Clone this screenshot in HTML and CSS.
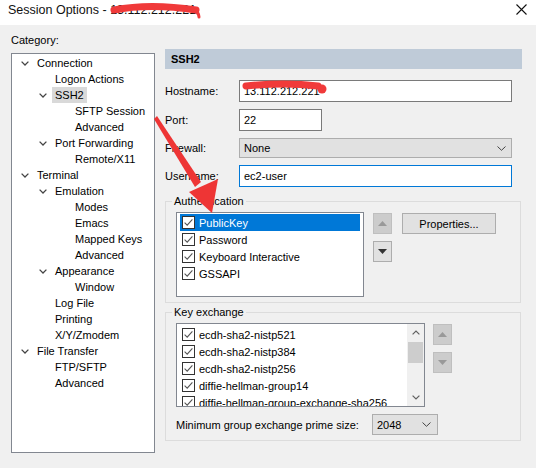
FILE: index.html
```html
<!DOCTYPE html>
<html>
<head>
<meta charset="utf-8">
<title>Session Options</title>
<link rel="stylesheet" href="styles.css">
</head>
<body>
<div class="window">
  <div class="titlebar">
    <span class="title">Session Options - 13.112.212.221</span>
    <svg class="close" width="11" height="11" viewBox="0 0 11 11"><path d="M0.5 0.5 L10.5 10.5 M10.5 0.5 L0.5 10.5" stroke="#111" stroke-width="1.1" fill="none"/></svg>
  </div>
  <div class="dialog">
    <div class="left">
      <div class="cat-label">Category:</div>
      <div class="tree">
        <div class="node l0"><span class="tog"><svg width="8" height="5" viewBox="0 0 8 5"><path d="M0.6 0.6 L4 4 L7.4 0.6" stroke="#444" stroke-width="1.3" fill="none"/></svg></span><span class="txt">Connection</span></div>
        <div class="node l1"><span class="tog"></span><span class="txt">Logon Actions</span></div>
        <div class="node l1 sel"><span class="tog"><svg width="8" height="5" viewBox="0 0 8 5"><path d="M0.6 0.6 L4 4 L7.4 0.6" stroke="#444" stroke-width="1.3" fill="none"/></svg></span><span class="txt">SSH2</span></div>
        <div class="node l2"><span class="tog"></span><span class="txt">SFTP Session</span></div>
        <div class="node l2"><span class="tog"></span><span class="txt">Advanced</span></div>
        <div class="node l1"><span class="tog"><svg width="8" height="5" viewBox="0 0 8 5"><path d="M0.6 0.6 L4 4 L7.4 0.6" stroke="#444" stroke-width="1.3" fill="none"/></svg></span><span class="txt">Port Forwarding</span></div>
        <div class="node l2"><span class="tog"></span><span class="txt">Remote/X11</span></div>
        <div class="node l0"><span class="tog"><svg width="8" height="5" viewBox="0 0 8 5"><path d="M0.6 0.6 L4 4 L7.4 0.6" stroke="#444" stroke-width="1.3" fill="none"/></svg></span><span class="txt">Terminal</span></div>
        <div class="node l1"><span class="tog"><svg width="8" height="5" viewBox="0 0 8 5"><path d="M0.6 0.6 L4 4 L7.4 0.6" stroke="#444" stroke-width="1.3" fill="none"/></svg></span><span class="txt">Emulation</span></div>
        <div class="node l2"><span class="tog"></span><span class="txt">Modes</span></div>
        <div class="node l2"><span class="tog"></span><span class="txt">Emacs</span></div>
        <div class="node l2"><span class="tog"></span><span class="txt">Mapped Keys</span></div>
        <div class="node l2"><span class="tog"></span><span class="txt">Advanced</span></div>
        <div class="node l1"><span class="tog"><svg width="8" height="5" viewBox="0 0 8 5"><path d="M0.6 0.6 L4 4 L7.4 0.6" stroke="#444" stroke-width="1.3" fill="none"/></svg></span><span class="txt">Appearance</span></div>
        <div class="node l2"><span class="tog"></span><span class="txt">Window</span></div>
        <div class="node l1"><span class="tog"></span><span class="txt">Log File</span></div>
        <div class="node l1"><span class="tog"></span><span class="txt">Printing</span></div>
        <div class="node l1"><span class="tog"></span><span class="txt">X/Y/Zmodem</span></div>
        <div class="node l0"><span class="tog"><svg width="8" height="5" viewBox="0 0 8 5"><path d="M0.6 0.6 L4 4 L7.4 0.6" stroke="#444" stroke-width="1.3" fill="none"/></svg></span><span class="txt">File Transfer</span></div>
        <div class="node l1"><span class="tog"></span><span class="txt">FTP/SFTP</span></div>
        <div class="node l1"><span class="tog"></span><span class="txt">Advanced</span></div>
      </div>
    </div>
    <div class="right">
      <div class="header">SSH2</div>
      <div class="form">
        <div class="lbl">Hostname:</div>
        <div class="input wide">13.112.212.221</div>
        <div class="lbl">Port:</div>
        <div class="input port">22</div>
        <div class="lbl">Firewall:</div>
        <div class="select wide"><span>None</span><svg width="9" height="5" viewBox="0 0 9 5"><path d="M0.5 0.5 L4.5 4.3 L8.5 0.5" stroke="#444" stroke-width="1" fill="none"/></svg></div>
        <div class="lbl">Username:</div>
        <div class="input wide focus">ec2-user</div>
      </div>

      <fieldset class="group auth">
        <legend>Authentication</legend>
        <div class="group-row">
          <div class="list auth-list">
            <div class="item selected"><svg class="cb" width="13" height="13" viewBox="0 0 13 13"><rect x="0.5" y="0.5" width="12" height="12" fill="#fff" stroke="#333"/><path d="M2.6 6.6 L5.2 9.2 L10.4 3.4" stroke="#555" stroke-width="1.1" fill="none"/></svg><span>PublicKey</span></div>
            <div class="item"><svg class="cb" width="13" height="13" viewBox="0 0 13 13"><rect x="0.5" y="0.5" width="12" height="12" fill="#fff" stroke="#333"/><path d="M2.6 6.6 L5.2 9.2 L10.4 3.4" stroke="#555" stroke-width="1.1" fill="none"/></svg><span>Password</span></div>
            <div class="item"><svg class="cb" width="13" height="13" viewBox="0 0 13 13"><rect x="0.5" y="0.5" width="12" height="12" fill="#fff" stroke="#333"/><path d="M2.6 6.6 L5.2 9.2 L10.4 3.4" stroke="#555" stroke-width="1.1" fill="none"/></svg><span>Keyboard Interactive</span></div>
            <div class="item"><svg class="cb" width="13" height="13" viewBox="0 0 13 13"><rect x="0.5" y="0.5" width="12" height="12" fill="#fff" stroke="#333"/><path d="M2.6 6.6 L5.2 9.2 L10.4 3.4" stroke="#555" stroke-width="1.1" fill="none"/></svg><span>GSSAPI</span></div>
          </div>
          <div class="arrows auth-arrows">
            <div class="abtn disabled"><svg width="9" height="5" viewBox="0 0 9 5"><path d="M0 5 L4.5 0 L9 5 Z" fill="#999"/></svg></div>
            <div class="abtn"><svg width="9" height="5" viewBox="0 0 9 5"><path d="M0 0 L4.5 5 L9 0 Z" fill="#333"/></svg></div>
          </div>
          <div class="button props">Properties...</div>
        </div>
      </fieldset>

      <fieldset class="group kex">
        <legend>Key exchange</legend>
        <div class="group-row">
          <div class="list kex-list">
            <div class="kex-items">
              <div class="item"><svg class="cb" width="13" height="13" viewBox="0 0 13 13"><rect x="0.5" y="0.5" width="12" height="12" fill="#fff" stroke="#333"/><path d="M2.6 6.6 L5.2 9.2 L10.4 3.4" stroke="#555" stroke-width="1.1" fill="none"/></svg><span>ecdh-sha2-nistp521</span></div>
              <div class="item"><svg class="cb" width="13" height="13" viewBox="0 0 13 13"><rect x="0.5" y="0.5" width="12" height="12" fill="#fff" stroke="#333"/><path d="M2.6 6.6 L5.2 9.2 L10.4 3.4" stroke="#555" stroke-width="1.1" fill="none"/></svg><span>ecdh-sha2-nistp384</span></div>
              <div class="item"><svg class="cb" width="13" height="13" viewBox="0 0 13 13"><rect x="0.5" y="0.5" width="12" height="12" fill="#fff" stroke="#333"/><path d="M2.6 6.6 L5.2 9.2 L10.4 3.4" stroke="#555" stroke-width="1.1" fill="none"/></svg><span>ecdh-sha2-nistp256</span></div>
              <div class="item"><svg class="cb" width="13" height="13" viewBox="0 0 13 13"><rect x="0.5" y="0.5" width="12" height="12" fill="#fff" stroke="#333"/><path d="M2.6 6.6 L5.2 9.2 L10.4 3.4" stroke="#555" stroke-width="1.1" fill="none"/></svg><span>diffie-hellman-group14</span></div>
              <div class="item"><svg class="cb" width="13" height="13" viewBox="0 0 13 13"><rect x="0.5" y="0.5" width="12" height="12" fill="#fff" stroke="#333"/><path d="M2.6 6.6 L5.2 9.2 L10.4 3.4" stroke="#555" stroke-width="1.1" fill="none"/></svg><span>diffie-hellman-group-exchange-sha256</span></div>
            </div>
            <div class="scrollbar">
              <div class="sb-arrow"><svg width="8" height="5" viewBox="0 0 8 5"><path d="M0.6 4.4 L4 1 L7.4 4.4" stroke="#606060" stroke-width="1.2" fill="none"/></svg></div>
              <div class="sb-track"><div class="sb-thumb"></div></div>
              <div class="sb-arrow"><svg width="8" height="5" viewBox="0 0 8 5"><path d="M0.6 0.6 L4 4 L7.4 0.6" stroke="#606060" stroke-width="1.2" fill="none"/></svg></div>
            </div>
          </div>
          <div class="arrows kex-arrows">
            <div class="abtn disabled"><svg width="9" height="5" viewBox="0 0 9 5"><path d="M0 5 L4.5 0 L9 5 Z" fill="#999"/></svg></div>
            <div class="abtn disabled"><svg width="9" height="5" viewBox="0 0 9 5"><path d="M0 0 L4.5 5 L9 0 Z" fill="#999"/></svg></div>
          </div>
        </div>
        <div class="prime-row">
          <span class="prime-lbl">Minimum group exchange prime size:</span>
          <div class="select prime"><span>2048</span><svg width="9" height="5" viewBox="0 0 9 5"><path d="M0.5 0.5 L4.5 4.3 L8.5 0.5" stroke="#444" stroke-width="1" fill="none"/></svg></div>
        </div>
      </fieldset>
    </div>
  </div>

  <svg class="annot" width="536" height="468" viewBox="0 0 536 468">
    <path d="M114 10 Q 150 3 196 10" stroke="#f03a3a" stroke-width="7" fill="none" stroke-linecap="round"/>
    <path d="M192 9 Q 199 12 199 17" stroke="#f03a3a" stroke-width="3" fill="none" stroke-linecap="round"/>
    <path d="M246 86 Q 285 82 318 86" stroke="#f03a3a" stroke-width="7" fill="none" stroke-linecap="round"/>
    <circle cx="322" cy="89" r="4.5" fill="#f03a3a"/>
    <polygon points="154,119 157,116 201,182 195,187" fill="#ee3535"/>
    <polygon points="189,192 218,179 212,213" fill="#ee3535"/>
  </svg>
</div>
</body>
</html>
```

FILE: styles.css
```css
* {
  box-sizing: border-box;
}

html, body {
  margin: 0;
  padding: 0;
}

body {
  width: 536px;
  height: 468px;
  overflow: hidden;
  font-family: "Liberation Sans", Arial, sans-serif;
  font-size: 11px;
  color: #000;
  background: #f0f0f0;
}

.window {
  position: relative;
  width: 536px;
  height: 468px;
}

.titlebar {
  height: 25px;
  background: #fff;
  display: flex;
  justify-content: space-between;
  align-items: flex-start;
  padding: 2px 9px 0 8px;
}

.title {
  font-size: 12.5px;
  line-height: 16px;
  color: #111;
}

.close {
  margin-top: 2px;
}

.dialog {
  display: flex;
  height: 443px;
}

.left {
  margin-left: 11px;
  padding-top: 8px;
  width: 144px;
  flex: none;
}

.cat-label {
  height: 14px;
  line-height: 14px;
  margin-bottom: 6px;
}

.tree {
  height: 400px;
  background: #fff;
  border: 1px solid #828790;
  padding-top: 1px;
}

.node {
  height: 16px;
  line-height: 16px;
  display: flex;
  align-items: center;
  white-space: nowrap;
}

.node.l0 { padding-left: 5px; }
.node.l1 { padding-left: 23px; }
.node.l2 { padding-left: 43px; }

.tog {
  width: 16px;
  height: 16px;
  flex: none;
  display: flex;
  align-items: center;
  justify-content: center;
}

.txt {
  margin-left: 4px;
}

.node.sel .txt {
  background: #d9d9d9;
  padding: 0 3px;
  margin-left: 1px;
}

.right {
  margin-left: 10px;
  padding-top: 24px;
  width: 357px;
  flex: none;
}

.header {
  height: 20px;
  line-height: 20px;
  background: #bfcbd8;
  font-weight: bold;
  padding-left: 6px;
}

.form {
  margin-top: 11px;
  display: grid;
  grid-template-columns: 74px auto;
  grid-template-rows: 22px 22px 20px 22px;
  row-gap: 7px;
  align-items: center;
}

.lbl {
  line-height: 14px;
}

.input {
  height: 22px;
  line-height: 20px;
  background: #fff;
  border: 1px solid #7a7a7a;
  padding-left: 4px;
  white-space: nowrap;
  overflow: hidden;
}

.input.focus {
  border-color: #0078d7;
}

.wide { width: 273px; }
.port { width: 83px; }

.select {
  height: 20px;
  background: #e1e1e1;
  border: 1px solid #adadad;
  display: flex;
  align-items: center;
  justify-content: space-between;
  padding: 0 5px 0 4px;
}

.group {
  margin: 7px 0 0 0;
  width: 356px;
  border: 1px solid #dcdcdc;
  padding: 0 10px 5px 10px;
}

.group legend {
  padding: 0 2px;
  margin-left: -4px;
  line-height: 14px;
}

.group.kex {
  margin-top: 2px;
}

.group-row {
  display: flex;
  align-items: flex-start;
  margin-top: 4px;
}

.list {
  background: #fff;
  border: 1px solid #828790;
  flex: none;
}

.auth-list {
  width: 188px;
  height: 85px;
  padding: 1px 3px;
}

.item {
  height: 17px;
  display: flex;
  align-items: center;
  padding-left: 2px;
  white-space: nowrap;
}

.item .cb {
  flex: none;
  margin-right: 4px;
}

.item.selected {
  background: #0078d7;
  color: #fff;
}

.arrows {
  display: flex;
  flex-direction: column;
  gap: 7px;
  margin-top: 1px;
  flex: none;
}

.auth-arrows { margin-left: 9px; }
.kex-arrows { margin-left: 8px; }

.abtn {
  width: 19px;
  height: 21px;
  background: #e1e1e1;
  border: 1px solid #adadad;
  display: flex;
  align-items: center;
  justify-content: center;
}

.abtn.disabled {
  background: #cccccc;
  border-color: #bfbfbf;
}

.button {
  height: 21px;
  background: #e1e1e1;
  border: 1px solid #adadad;
  display: flex;
  align-items: center;
  justify-content: center;
}

.props {
  width: 94px;
  margin-left: 10px;
  margin-top: 1px;
}

.kex-list {
  width: 249px;
  height: 84px;
  display: flex;
  overflow: hidden;
}

.kex-items {
  flex: 1;
  padding: 2px 0 0 3px;
  overflow: hidden;
}

.scrollbar {
  width: 17px;
  flex: none;
  background: #f0f0f0;
  display: flex;
  flex-direction: column;
}

.sb-arrow {
  height: 17px;
  display: flex;
  align-items: center;
  justify-content: center;
  flex: none;
}

.sb-track {
  flex: 1;
  padding-top: 1px;
}

.sb-thumb {
  height: 21px;
  margin: 0 1px;
  background: #cdcdcd;
}

.prime-row {
  display: flex;
  align-items: center;
  margin-top: 7px;
}

.prime-lbl {
  width: 196px;
  flex: none;
}

.select.prime {
  width: 66px;
  height: 21px;
  padding: 0 6px 0 4px;
}

.annot {
  position: absolute;
  left: 0;
  top: 0;
  pointer-events: none;
}
```
